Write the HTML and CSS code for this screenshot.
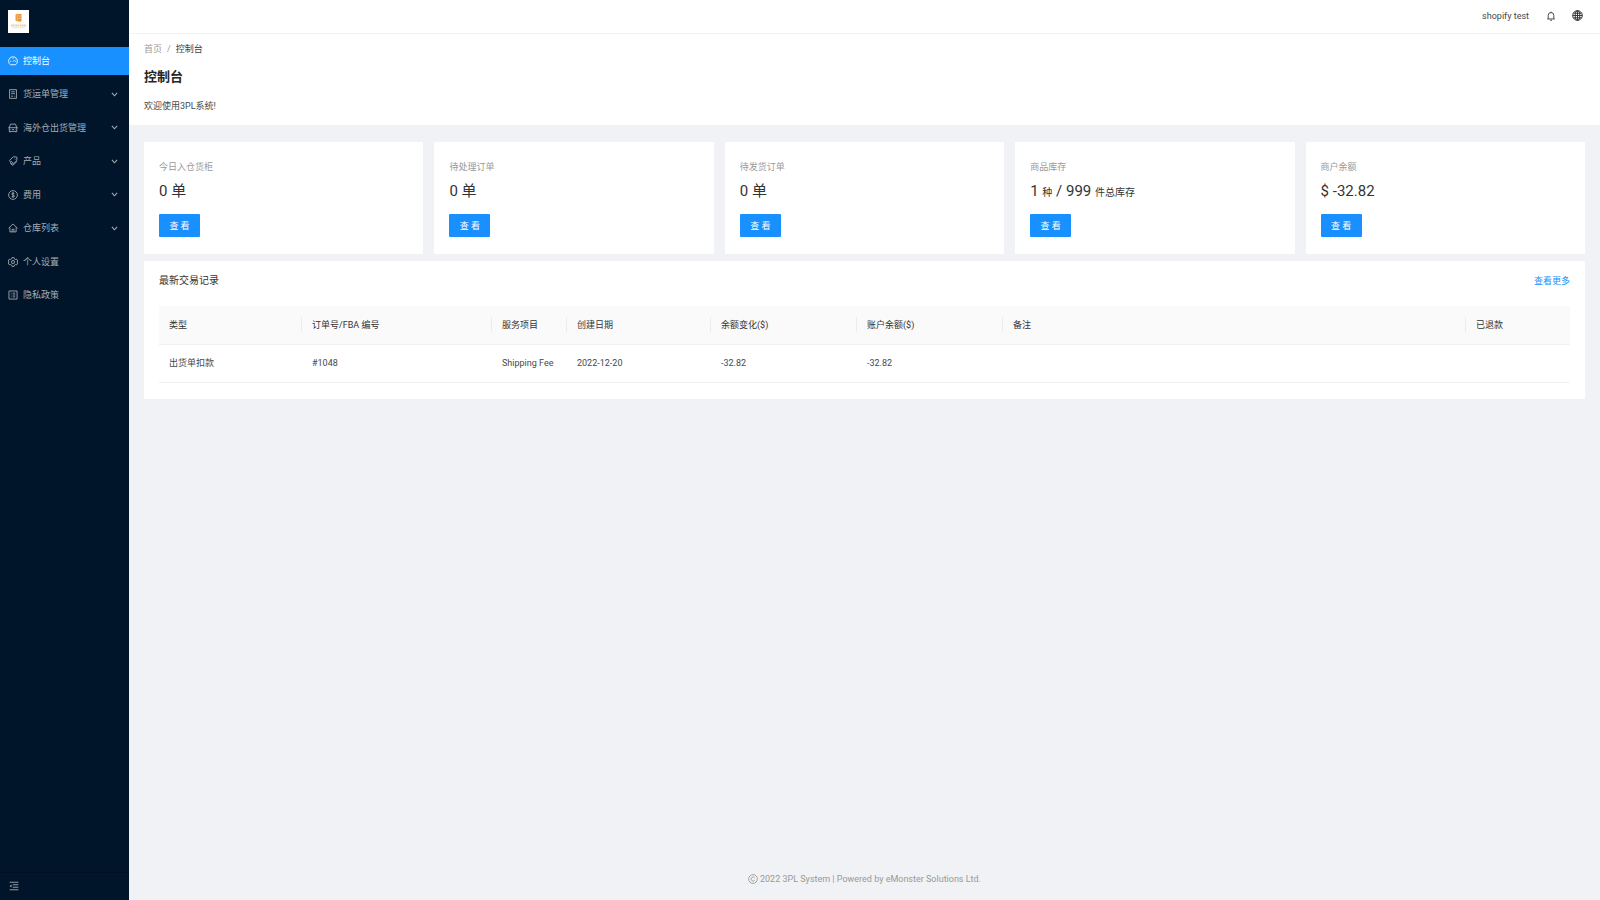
FILE: index.html
```html
<!DOCTYPE html>
<html lang="zh-CN">
<head>
<meta charset="utf-8">
<title>控制台</title>
<link rel="stylesheet" href="styles.css">
</head>
<body>
<svg class="sprite" aria-hidden="true">
  <symbol id="down" viewBox="0 0 16 16"><path d="M2 4.500l6 6.500 6-6.500"/></symbol>
</svg>
<div class="layout">
  <aside class="sider">
    <a class="logo" href="#" aria-label="首页">
      <svg viewBox="0 0 21 23"><path fill="#fff" d="M0 0h21v23H0z"/><path fill="#f0a040" d="M7.500 4.500l2-1v8l-2-.8z"/><path fill="#e5913a" d="M9.500 4h4v7.500h-4z"/><path stroke="#fbe3c4" stroke-width=".8" d="M10.500 6h2M10.500 8.500h2"/><path stroke="#eec898" stroke-width="2" stroke-dasharray="1.600 .6" d="M3 15.500h15"/><path stroke="#e9e4dc" stroke-width="1" d="M4 17.800h13"/></svg>
    </a>
    <nav class="menu">
      <a class="item active" href="#"><svg class="icon" viewBox="0 0 16 16"><path d="M4 14a7 7 0 1 1 8 0zM8 9l3-3M8 3v1.500M3.500 8.500H5M11.500 8.500H13"/></svg><span>控制台</span></a>
      <a class="item" href="#"><svg class="icon" viewBox="0 0 16 16"><path d="M2.500 1h11v14h-11zM5 4.500h6M5 7.500h6M5 11.500h3M10 11.500h1.500"/></svg><span>货运单管理</span><svg class="arrow"><use href="#down"/></svg></a>
      <a class="item" href="#"><svg class="icon" viewBox="0 0 16 16"><path d="M2 7.500L4 1.800h8l2 5.700v6H2zM.5 7.500h15M4 10.500h1M11 10.500h1M6.500 10.500h3M3 13.500V15M13 13.500V15"/></svg><span>海外仓出货管理</span><svg class="arrow"><use href="#down"/></svg></a>
      <a class="item" href="#"><svg class="icon" viewBox="0 0 16 16"><path d="M2.500 7L8.500 1.200l5.500.5.300 5.300-6 5.800-3-.3zM4 12l3.500 3 7-6.500M10.500 4.500l1 1M5 8l3 3"/></svg><span>产品</span><svg class="arrow"><use href="#down"/></svg></a>
      <a class="item" href="#"><svg class="icon" viewBox="0 0 16 16"><circle cx="8" cy="8" r="7"/><path d="M10.300 6C10 4.500 6 4.300 6 6.300S10.300 7.700 10.300 9.800 6 11.500 5.700 9.700M8 3.500v9"/></svg><span>费用</span><svg class="arrow"><use href="#down"/></svg></a>
      <a class="item" href="#"><svg class="icon" viewBox="0 0 16 16"><path d="M.8 8.500L8 1.500l7.200 7M3 7v7.200h10V7M6.500 14v-4h3v4"/></svg><span>仓库列表</span><svg class="arrow"><use href="#down"/></svg></a>
      <a class="item" href="#"><svg class="icon" viewBox="0 0 16 16"><path d="M6.300 1h3.400l.6 2 1.800 1 2-.4 1.500 2.800L14.200 8l1.400 1.600-1.500 2.800-2-.4-1.800 1-.6 2H6.300l-.6-2-1.800-1-2 .4L.4 9.600 1.800 8 .4 6.400l1.500-2.800 2 .4 1.800-1z"/><circle cx="8" cy="8" r="2.500"/></svg><span>个人设置</span></a>
      <a class="item" href="#"><svg class="icon" viewBox="0 0 16 16"><path d="M1.500 1.500h13v13h-13zM4.500 5h1M4.500 8h1M4.500 11h1M7.500 5h4M7.500 8h4M7.500 11h4"/></svg><span>隐私政策</span></a>
    </nav>
    <button class="collapse" aria-label="收起菜单"><svg class="icon" viewBox="0 0 16 16"><path d="M1 2h14M6 6h9M6 10h9M1 14h14"/><path class="solid" d="M1 8l3-2.500v5z"/></svg></button>
  </aside>
  <div class="main">
    <header class="topbar">
      <a class="user" href="#">shopify test</a>
      <button class="tool" aria-label="通知"><svg class="icon" viewBox="0 0 16 16"><path d="M3.500 12.500V7a4.500 4.500 0 0 1 9 0v5.500M2 12.700h12M8 1v1.500M6.500 14.800h3"/></svg></button>
      <button class="tool globe" aria-label="语言"><svg class="icon" viewBox="0 0 16 16"><circle cx="8" cy="8" r="7"/><ellipse cx="8" cy="8" rx="3.300" ry="7"/><path d="M8 1v14M1 8h14M2 4.700h12M2 11.300h12"/></svg></button>
    </header>
    <section class="heading">
      <nav class="crumbs"><a href="#">首页</a><span class="slash">/</span><span class="here">控制台</span></nav>
      <h1>控制台</h1>
      <p>欢迎使用3PL系统!</p>
    </section>
    <main class="content">
      <div class="stats">
        <article class="card stat"><h2>今日入仓货柜</h2><p>0 单</p><button class="primary">查 看</button></article>
        <article class="card stat"><h2>待处理订单</h2><p>0 单</p><button class="primary">查 看</button></article>
        <article class="card stat"><h2>待发货订单</h2><p>0 单</p><button class="primary">查 看</button></article>
        <article class="card stat"><h2>商品库存</h2><p>1 <small>种</small> / 999 <small>件总库存</small></p><button class="primary">查 看</button></article>
        <article class="card stat"><h2>商户余额</h2><p>$ -32.82</p><button class="primary">查 看</button></article>
      </div>
      <section class="card records">
        <div class="records-head"><h2>最新交易记录</h2><a href="#">查看更多</a></div>
        <table>
          <colgroup><col class="c-type"><col class="c-order"><col class="c-service"><col class="c-date"><col class="c-money"><col class="c-money"><col><col class="c-refund"></colgroup>
          <thead><tr><th>类型</th><th>订单号/FBA 编号</th><th>服务项目</th><th>创建日期</th><th>余额变化($)</th><th>账户余额($)</th><th>备注</th><th>已退款</th></tr></thead>
          <tbody><tr><td>出货单扣款</td><td>#1048</td><td>Shipping Fee</td><td>2022-12-20</td><td>-32.82</td><td>-32.82</td><td></td><td></td></tr></tbody>
        </table>
      </section>
    </main>
    <footer class="footer"><svg class="icon" viewBox="0 0 16 16"><circle cx="8" cy="8" r="7"/><path d="M10.800 6.200a3.200 3.200 0 1 0 0 3.600"/></svg><span>2022 3PL System | Powered by eMonster Solutions Ltd.</span></footer>
  </div>
</div>
</body>
</html>
```
FILE: styles.css
```css
* { box-sizing: border-box; }
body, h1, h2, p { margin: 0; }
body {
  font: 9px/14px Roboto, "Noto Sans CJK SC", sans-serif;
  color: #484848;
  background: #f0f2f5;
}
a { color: inherit; text-decoration: none; }
button { font: inherit; border: 0; padding: 0; background: none; color: inherit; cursor: pointer; }
.sprite { position: absolute; width: 0; height: 0; }
.icon, .arrow { fill: none; stroke: currentColor; stroke-width: 1.4; flex: none; }
.icon { width: 10px; height: 10px; }
.icon .solid { fill: currentColor; stroke: none; }

.layout { display: flex; min-height: 100vh; }

.sider {
  width: 129px;
  flex: none;
  display: flex;
  flex-direction: column;
  background: #001529;
  color: #a6adb4;
}
.logo { display: block; height: 47px; padding: 10px 8px; }
.logo svg { display: block; width: 21px; height: 23px; }
.menu {
  display: flex;
  flex-direction: column;
  justify-content: space-between;
  min-height: 262px;
}
.item { display: flex; align-items: center; height: 28px; padding: 0 11px 0 8px; }
.item span { margin-left: 5px; }
.item.active { background: #1890ff; color: #fff; }
.arrow { width: 7px; height: 7px; margin-left: auto; stroke-width: 2.5; }
.collapse {
  display: flex;
  align-items: center;
  height: 28px;
  margin-top: auto;
  padding: 0 9px 1px;
  border-top: 1px solid #001023;
}

.main { flex: 1; min-width: 0; display: flex; flex-direction: column; }
.topbar {
  display: flex;
  justify-content: flex-end;
  align-items: center;
  height: 34px;
  padding: 0 17px 2px;
  background: #fff;
  border-bottom: 1px solid #f2f3f5;
}
.tool { display: flex; margin-left: 16px; color: #333; }
.user { margin-right: 1px; }
.globe .icon { width: 11px; height: 11px; }

.heading { padding: 8px 15px 12px; background: #fff; }
.crumbs { display: flex; gap: 5px; color: #999; }
.crumbs .here { color: #404040; }
.heading h1 { margin: 11px 0 12px; font-size: 13px; line-height: 20px; font-weight: 700; color: #262626; }

.content { padding: 17px 15px; }
.card { background: #fff; border-radius: 1px; }
.stats { display: grid; grid-template-columns: repeat(5, 1fr); gap: 11px; }
.stat { padding: 18px 15px 17px; }
.stat h2 { font-size: 9px; font-weight: 400; color: #999; }
.stat p { margin: 6px 0 12px; font-size: 15px; line-height: 22px; color: #333; }
.stat small { font-size: 10px; line-height: 10px; }
.primary {
  display: block;
  width: 41px;
  height: 23px;
  border-radius: 1px;
  background: #1890ff;
  color: #fff;
  text-align: center;
}
.records { margin-top: 7px; padding: 13px 15px 16px; }
.records-head { display: flex; justify-content: space-between; margin-bottom: 18px; }
.records-head h2 { font-size: 10px; font-weight: 400; color: #333; }
.records-head a { color: #1890ff; }

table { width: 100%; table-layout: fixed; border-collapse: collapse; }
.c-type { width: 143px; }
.c-order { width: 190px; }
.c-service { width: 75px; }
.c-date { width: 144px; }
.c-money { width: 146px; }
.c-refund { width: 104px; }
th, td { height: 38px; padding: 0 10px; text-align: left; font-weight: 400; border-bottom: 1px solid #f0f0f0; white-space: nowrap; }
th {
  color: #333;
  background: linear-gradient(#ececec, #ececec) right center / 1px 15px no-repeat #fafafa;
}
th:last-child { background: #fafafa; }

.footer {
  display: flex;
  justify-content: center;
  align-items: center;
  gap: 2px;
  margin-top: auto;
  padding-bottom: 14px;
  color: #999;
}
```
